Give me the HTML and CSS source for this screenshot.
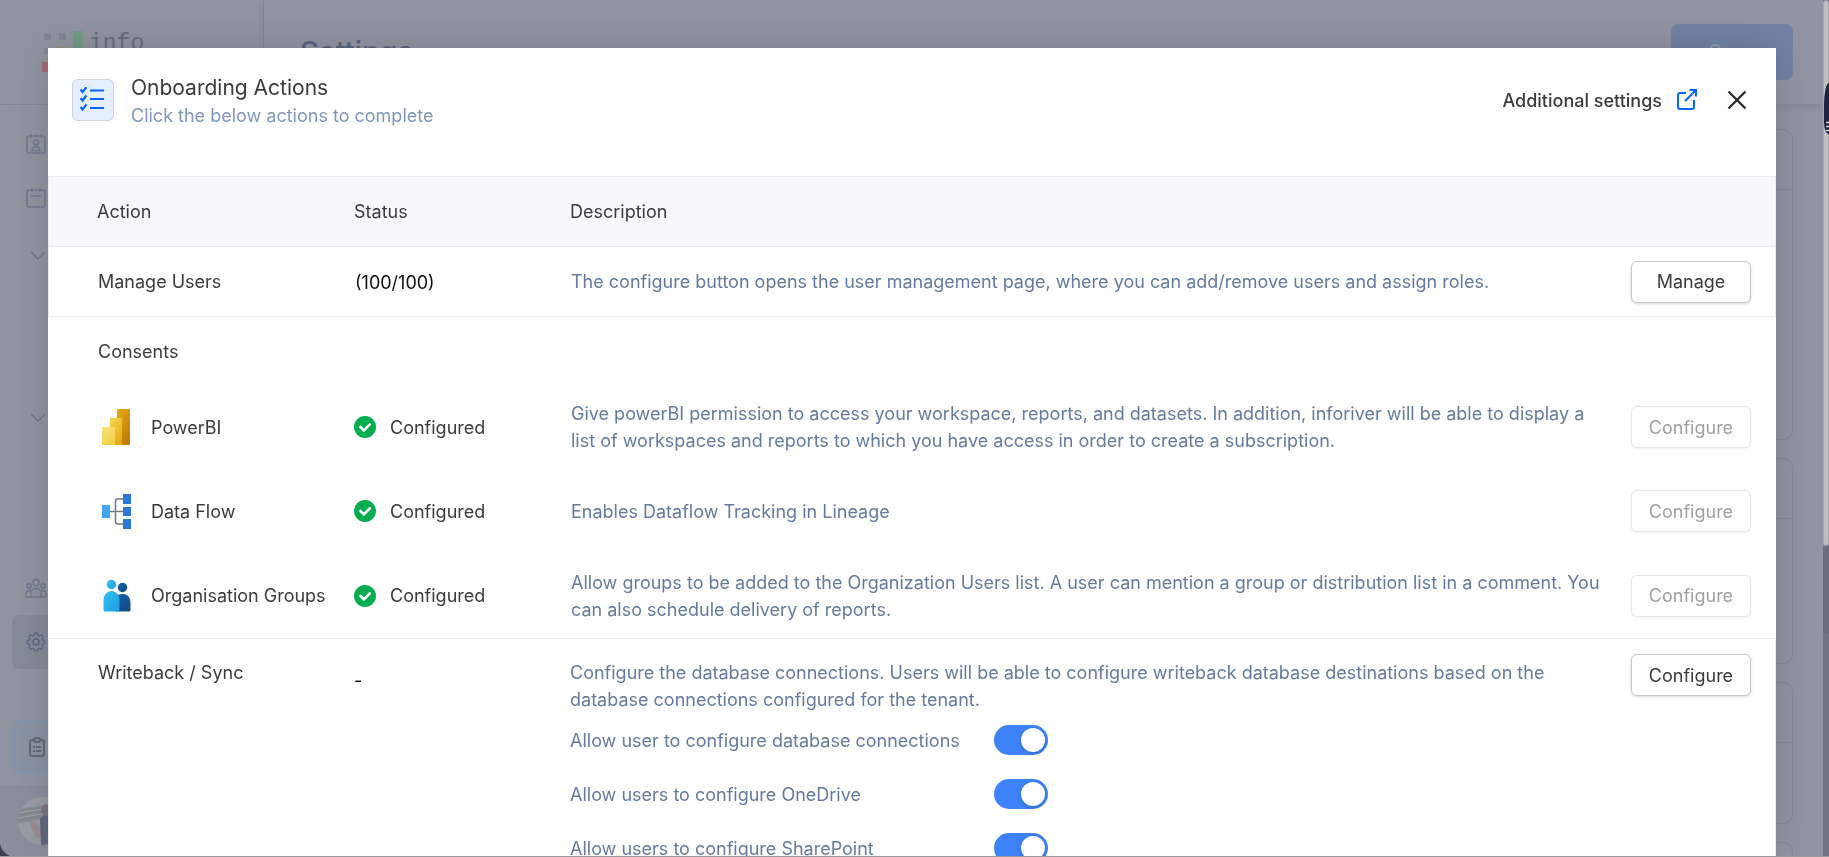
FILE: index.html
```html
<!DOCTYPE html>
<html lang="en">
<head>
<meta charset="utf-8">
<title>Settings</title>
<link rel="stylesheet" href="styles.css">
</head>
<body>
<div class="app">
  <aside class="sidebar">
    <div class="brand">
      <svg class="brand-mark" width="42" height="42" viewBox="0 0 42 42" aria-hidden="true">
        <path fill="#858891" d="M2 2h7v7H2zM17 2h7v7h-7zM2 17h7v7H2z"/>
        <path fill="#a58d66" d="M15 16h11v11H15z"/>
        <path fill="#6d9d80" d="M31 0h10v41H31z"/>
        <path fill="#aa6673" d="M0 31h10v10H0z"/>
      </svg>
      <span class="brand-name">info</span>
    </div>
    <nav class="nav" aria-label="Main">
      <a class="nav-item" href="#" aria-label="Contacts">
        <svg width="24" height="24" viewBox="0 0 24 24"><rect x="3" y="4" width="18" height="17" rx="2"/><path d="M7 2v4M12 2v2M17 2v4M8 18.500c0-5 8-5 8 0z"/><circle cx="12" cy="10.500" r="2.500"/></svg>
      </a>
      <a class="nav-item" href="#" aria-label="Calendar">
        <svg width="24" height="24" viewBox="0 0 24 24"><rect x="3" y="4" width="18" height="17" rx="2"/><path d="M8 2v4M16 2v4M7 10h10"/></svg>
      </a>
      <a class="nav-item nav-group" href="#" aria-label="Expand group">
        <svg width="24" height="24" viewBox="0 0 24 24"><path d="M7 9l7 7 7-7"/></svg>
      </a>
      <a class="nav-item nav-group-last" href="#" aria-label="Expand group">
        <svg width="24" height="24" viewBox="0 0 24 24"><path d="M7 9l7 7 7-7"/></svg>
      </a>
      <a class="nav-item nav-people" href="#" aria-label="People">
        <svg width="24" height="24" viewBox="0 0 24 24"><circle cx="12" cy="6.500" r="3"/><circle cx="5" cy="10" r="2.200"/><circle cx="19" cy="10" r="2.200"/><path d="M7 21v-4c0-6 10-6 10 0v4zM7 21H2v-3c0-3 2-4 5-3M17 21h5v-3c0-3-2-4-5-3"/></svg>
      </a>
      <a class="nav-item nav-current" href="#" aria-label="Settings">
        <svg width="24" height="24" viewBox="0 0 24 24"><circle cx="12" cy="12" r="3"/><path d="M10.300 4.300c.4-1.800 3-1.800 3.400 0a1.700 1.700 0 0 0 2.600 1.100c1.500-1 3.300.8 2.400 2.400a1.700 1.700 0 0 0 1 2.500c1.800.4 1.800 3 0 3.400a1.700 1.700 0 0 0-1 2.600c.9 1.500-.9 3.300-2.400 2.400a1.700 1.700 0 0 0-2.600 1c-.4 1.800-3 1.800-3.400 0a1.700 1.700 0 0 0-2.600-1c-1.500.9-3.300-.9-2.400-2.400a1.700 1.700 0 0 0-1-2.600c-1.800-.4-1.800-3 0-3.400a1.700 1.700 0 0 0 1-2.500c-.9-1.600.9-3.400 2.400-2.400a1.700 1.700 0 0 0 2.600-1.100z"/></svg>
      </a>
      <a class="nav-item nav-tasks" href="#" aria-label="Tasks">
        <svg width="24" height="24" viewBox="0 0 24 24"><path d="M9 5H7a2 2 0 0 0-2 2v12a2 2 0 0 0 2 2h10a2 2 0 0 0 2-2V7a2 2 0 0 0-2-2h-2"/><rect x="9" y="3" width="6" height="4" rx="2"/><path d="M8 12h2M11 12h5M8 16h2M11 16h5"/></svg>
      </a>
    </nav>
    <div class="account">
      <svg width="48" height="48" viewBox="0 0 48 48" aria-hidden="true">
        <clipPath id="avatar"><circle cx="24" cy="24" r="24"/></clipPath>
        <g clip-path="url(#avatar)">
          <path fill="#9a9ea5" d="M0 0h48v48H0z"/>
          <path fill="#838b90" d="M0 12l48-6v12L0 26z"/>
          <path stroke="#a3a8ad" stroke-width="1" fill="none" d="M0 16l30-5M0 21l30-5"/>
          <path fill="#9d8e93" d="M11 24l4-2 8 10v9h-5z"/>
          <path fill="#5d667f" d="M22 22l4-4h11v30H23z"/>
          <ellipse cx="28" cy="13" rx="5" ry="6" fill="#7b737d"/>
        </g>
      </svg>
    </div>
  </aside>
  <main class="page">
    <header class="page-header">
      <h1 class="page-title">Settings</h1>
      <button class="save" type="button">Save</button>
    </header>
    <div class="cards">
      <section class="card card-tall"><div class="card-head"></div></section>
      <section class="card card-medium"><div class="card-head"></div></section>
      <section class="card card-short"><div class="card-head"></div></section>
      <section class="card card-short"><div class="card-head"></div></section>
    </div>
  </main>
  <div class="scrollbar"><div class="scroll-thumb"></div><div class="scroll-inner"></div></div>
  <div class="side-tab"><svg width="3" height="12" viewBox="0 0 3 12" aria-hidden="true"><path d="M0 1.500h3M0 5.500h3M0 9.500h3" stroke="#d5d7e2" stroke-width="1.500"/></svg></div>
</div>

<div class="overlay">
  <section class="modal" role="dialog" aria-labelledby="dialog-title">
    <header class="modal-header">
      <span class="modal-icon">
        <svg width="26" height="26" viewBox="0 0 26 26" fill="none" stroke="#0766ff" stroke-width="2" aria-hidden="true"><path d="M10 3.500h14M10 12h14M10 21h14"/><path stroke-width="2.200" d="M.5 2.500l2 2.500 4-5M.5 11l2 2.500 4-5M.5 20l2 2.500 4-5"/></svg>
      </span>
      <div class="modal-heading">
        <h2 class="modal-title" id="dialog-title">Onboarding Actions</h2>
        <p class="modal-subtitle">Click the below actions to complete</p>
      </div>
      <a class="more" href="#">Additional settings
        <svg width="22" height="22" viewBox="0 0 22 22" fill="none" stroke="#0766ff" stroke-width="2" aria-hidden="true"><path d="M10 4H4a2 2 0 0 0-2 2v12a2 2 0 0 0 2 2h12a2 2 0 0 0 2-2v-7"/><path d="M13.500 1H20v6.500M20 1L9 12"/></svg>
      </a>
      <button class="close" type="button" aria-label="Close">
        <svg width="20" height="20" viewBox="0 0 20 20" fill="none" stroke="#2d2d30" stroke-width="2.400" aria-hidden="true"><path d="M1.500 1.500l17 17M18.500 1.500l-17 17"/></svg>
      </button>
    </header>

    <table class="actions">
      <colgroup><col class="col-action"><col class="col-status"><col><col class="col-button"></colgroup>
      <thead>
        <tr><th>Action</th><th>Status</th><th>Description</th><td></td></tr>
      </thead>
      <tbody class="group">
        <tr class="row-short">
          <td>Manage Users</td>
          <td class="count">(100/100)</td>
          <td class="desc">The configure button opens the user management page, where you can add/remove users and assign roles.</td>
          <td><button class="btn" type="button">Manage</button></td>
        </tr>
      </tbody>
      <tbody class="group group-plain">
        <tr class="row-short"><td colspan="4">Consents</td></tr>
        <tr class="row-tall">
          <td><span class="service">
            <svg width="36" height="36" viewBox="0 0 36 36" aria-hidden="true">
              <defs>
                <linearGradient id="pb1" x2=".5" y2="1"><stop stop-color="#e3ab10"/><stop offset="1" stop-color="#c27d0d"/></linearGradient>
                <linearGradient id="pb2" x2=".5" y2="1"><stop stop-color="#f4d350"/><stop offset="1" stop-color="#e6ae15"/></linearGradient>
                <linearGradient id="pb3" x2=".5" y2="1"><stop stop-color="#f9e384"/><stop offset="1" stop-color="#f4d045"/></linearGradient>
              </defs>
              <rect x="19" y="0" width="13" height="36" rx="1" fill="url(#pb1)"/>
              <path fill="url(#pb2)" d="M12 9h11a1 1 0 0 1 1 1v26H12z"/>
              <path fill="url(#pb3)" d="M4 18h12a1 1 0 0 1 1 1v17H4z"/>
            </svg>PowerBI</span></td>
          <td><span class="status"><svg width="22" height="22" viewBox="0 0 22 22" aria-hidden="true"><circle cx="11" cy="11" r="11" fill="#05ac50"/><path d="M6.500 11l3.300 3.300 6-6" fill="none" stroke="#fff" stroke-width="2.600" stroke-linecap="round"/></svg>Configured</span></td>
          <td class="desc">Give powerBI permission to access your workspace, reports, and datasets. In addition, inforiver will be able to display a list of workspaces and reports to which you have access in order to create a subscription.</td>
          <td><button class="btn" type="button" disabled>Configure</button></td>
        </tr>
        <tr class="row-tall">
          <td><span class="service">
            <svg width="36" height="36" viewBox="0 0 36 36" aria-hidden="true">
              <path d="M12 18.500h14M26 6h-6q-2.500 0-2.500 2.500v20q0 2.500 2.500 2.500h6" fill="none" stroke="#707a86" stroke-width="1.500"/>
              <path fill="#45a4f0" d="M4 12h8v13H4z"/>
              <path fill="#2b7ad8" d="M25 1h8v10h-8zM25 14h8v9h-8zM25 26h8v10h-8z"/>
            </svg>Data Flow</span></td>
          <td><span class="status"><svg width="22" height="22" viewBox="0 0 22 22" aria-hidden="true"><circle cx="11" cy="11" r="11" fill="#05ac50"/><path d="M6.500 11l3.300 3.300 6-6" fill="none" stroke="#fff" stroke-width="2.600" stroke-linecap="round"/></svg>Configured</span></td>
          <td class="desc">Enables Dataflow Tracking in Lineage</td>
          <td><button class="btn" type="button" disabled>Configure</button></td>
        </tr>
        <tr class="row-tall">
          <td><span class="service">
            <svg width="36" height="36" viewBox="0 0 36 36" aria-hidden="true">
              <defs>
                <linearGradient id="og1" x2="1" y2="1"><stop stop-color="#35c2f0"/><stop offset="1" stop-color="#1d9ce3"/></linearGradient>
                <linearGradient id="og2" x2=".6" y2="1"><stop stop-color="#0f63ac"/><stop offset="1" stop-color="#174a86"/></linearGradient>
              </defs>
              <circle cx="24.500" cy="9.500" r="4.700" fill="url(#og2)"/>
              <path fill="url(#og2)" d="M18 19c2-3 5-3 7-3 5 0 7.500 4 7.500 9v7q0 1.500-1.500 1.500H18z"/>
              <circle cx="13.500" cy="6.500" r="4.700" fill="url(#og1)"/>
              <path fill="url(#og1)" d="M5.500 22c0-5 3.500-9 8-9s8 4 8 9v9.500q0 2-2 2H7q-1.500 0-1.500-1.500z"/>
            </svg>Organisation Groups</span></td>
          <td><span class="status"><svg width="22" height="22" viewBox="0 0 22 22" aria-hidden="true"><circle cx="11" cy="11" r="11" fill="#05ac50"/><path d="M6.500 11l3.300 3.300 6-6" fill="none" stroke="#fff" stroke-width="2.600" stroke-linecap="round"/></svg>Configured</span></td>
          <td class="desc">Allow groups to be added to the Organization Users list. A user can mention a group or distribution list in a comment. You can also schedule delivery of reports.</td>
          <td><button class="btn" type="button" disabled>Configure</button></td>
        </tr>
      </tbody>
      <tbody class="group">
        <tr class="row-open">
          <td>Writeback / Sync</td>
          <td class="empty">-</td>
          <td class="desc">
            <p class="desc-text">Configure the database connections. Users will be able to configure writeback database destinations based on the database connections configured for the tenant.</p>
            <div class="option"><label for="opt-db">Allow user to configure database connections</label><input class="toggle" id="opt-db" type="checkbox" role="switch" checked></div>
            <div class="option"><label for="opt-od">Allow users to configure OneDrive</label><input class="toggle" id="opt-od" type="checkbox" role="switch" checked></div>
            <div class="option"><label for="opt-sp">Allow users to configure SharePoint</label><input class="toggle" id="opt-sp" type="checkbox" role="switch" checked></div>
          </td>
          <td class="cell-button"><button class="btn" type="button">Configure</button></td>
        </tr>
      </tbody>
    </table>
  </section>
</div>
</body>
</html>
```
FILE: styles.css
```css
* { box-sizing: border-box; }

body {
  margin: 0;
  height: 100vh;
  overflow: hidden;
  background: #3a4150;
  color: #3b3b3d;
  font: 18px/27px Inter, "Liberation Sans", sans-serif;
}

button { font: inherit; cursor: pointer; }
h1, h2, p { margin: 0; }

/* Dimmed page behind the dialog */
.app {
  position: relative;
  display: flex;
  height: 100%;
  overflow: hidden;
  background: #9195a0;
  border-bottom-left-radius: 16px;
}

.sidebar {
  display: flex;
  flex-direction: column;
  width: 264px;
  border-right: 1px solid #838894;
}

.brand {
  display: flex;
  gap: 5px;
  height: 105px;
  padding: 31px 0 0 42px;
  border-bottom: 1px solid #838894;
}

.brand-name {
  color: #666a75;
  font: 23px/27px "Liberation Mono", monospace;
}

.nav { flex: 1; padding: 12px 12px 0; }

.nav-item {
  display: flex;
  align-items: center;
  height: 54px;
  padding-left: 12px;
  border-radius: 8px;
}

.nav-item svg {
  fill: none;
  stroke: #6f788d;
  stroke-width: 1.5;
}

.nav-group { margin-top: 3px; }
.nav-group-last { margin-top: 108px; }
.nav-people { margin-top: 117px; }
.nav-current { background: #868b98; }
.nav-current svg { stroke: #5d6984; }

.nav-tasks {
  margin-top: 51px;
  background: #8b94a3;
  border: 1px solid #8097b1;
}

.nav-tasks svg { stroke: #61656f; stroke-width: 2; }

.account {
  height: 72px;
  padding: 12px 18px;
  background: #8b8f9b;
}

.page { flex: 1; display: flex; flex-direction: column; }

.page-header {
  display: flex;
  flex: none;
  align-items: center;
  justify-content: space-between;
  height: 105px;
  padding: 0 30px 0 36px;
  border-bottom: 1px solid #868b96;
  box-shadow: 0 2px 6px rgba(70, 76, 92, 0.16);
}

.page-title {
  color: #566079;
  font-size: 29px;
  line-height: 36px;
  font-weight: 500;
}

.save {
  width: 122px;
  height: 56px;
  background: #7082a3;
  border: 0;
  border-radius: 8px;
  color: #929aae;
  font-size: 20px;
  font-weight: 500;
}

.cards {
  display: flex;
  flex-direction: column;
  gap: 18px;
  padding: 24px 30px 0 36px;
}

.card {
  flex: none;
  border: 1px solid #838894;
  border-radius: 10px;
}

.card-head { height: 60px; border-bottom: 1px solid #838894; }
.card-tall { height: 311px; }
.card-medium { height: 206px; }
.card-short { height: 142px; }

.scrollbar {
  display: flex;
  flex-direction: column;
  width: 6px;
  background: #717580;
}

.scroll-thumb {
  height: 546px;
  background: #bfbfc0;
  border: 1px solid #a4a6aa;
  border-radius: 3px;
}

.scroll-inner { height: 88px; background: #696e79; border-radius: 0 0 3px 3px; }

.side-tab {
  position: absolute;
  top: 83px;
  right: 0;
  width: 5px;
  height: 51px;
  padding: 38px 0 0 2px;
  background: #1d2142;
  border-radius: 5px 0 0 5px / 22px 0 0 12px;
  line-height: 0;
}

/* Dialog */
.overlay {
  position: fixed;
  inset: 0;
  display: flex;
  padding: 48px 53px 0 48px;
  border-bottom: 1px solid #999a9e;
  overflow: hidden;
}

.modal {
  flex: 1;
  min-width: 0;
  background: #fff;
  box-shadow: 0 0 36px rgba(70, 76, 92, 0.3);
}

.modal-header {
  display: flex;
  align-items: flex-start;
  height: 128px;
  padding: 25px 29px 0 24px;
}

.modal-icon {
  display: flex;
  align-items: center;
  justify-content: center;
  width: 42px;
  height: 42px;
  margin: 6px 17px 0 0;
  background: #e6efff;
  border: 1px solid #ccd3df;
  border-radius: 6px;
}

.modal-heading { flex: 1; }

.modal-title {
  font-size: 21px;
  line-height: 29px;
  font-weight: 400;
}

.modal-subtitle { color: #8297b8; }

.more {
  display: flex;
  align-items: center;
  gap: 14px;
  height: 54px;
  color: #3b3b3d;
  font-weight: 500;
  text-decoration: none;
}

.close {
  display: flex;
  align-items: center;
  height: 54px;
  padding: 0;
  margin-left: 29px;
  background: none;
  border: 0;
}

.actions {
  width: 100%;
  table-layout: fixed;
  border-collapse: separate;
  border-spacing: 0;
}

.col-action { width: 306px; }
.col-status { width: 216px; }
.col-button { width: 162px; }

.actions th {
  background: #f5f8ff;
  font-weight: 400;
  text-align: left;
}

.actions thead td { background: #f5f8ff; }

.actions th,
.actions thead td {
  height: 71px;
  padding: 0;
  border-top: 1px solid #ebebed;
  border-bottom: 1px solid #ebebed;
}

.actions th:first-child { padding-left: 48px; }
.actions tbody td { padding: 0; }
.actions tbody td:first-child { padding-left: 49px; }
.actions tr > :first-child { border-left: 1px solid #ebebed; }
.actions tr > :last-child { border-right: 1px solid #ebebed; }
.actions .group-plain td:first-child { border-left-color: transparent; }
.actions .group-plain td:last-child { border-right-color: transparent; }
.actions .group tr:last-child td { border-bottom: 1px solid #ebebed; }

.row-short { height: 70px; }
.group-plain .row-short { height: 68px; }
.row-tall { height: 84px; }
.group-plain .row-tall:last-child { height: 86px; }
.row-open { vertical-align: top; }
.actions .row-open td { padding-top: 20px; }
.actions .row-open .empty { padding-top: 28px; color: #111; }
.actions .row-open .cell-button { padding-top: 15px; }

.actions .count { padding: 2px 0 0 1px; color: #111; }
.actions .desc { padding-right: 3px; color: #667a9d; }
.actions .group:not(:last-child) .desc { padding-left: 1px; }

.service { display: flex; align-items: center; gap: 17px; white-space: nowrap; }
.status { display: flex; align-items: center; gap: 14px; }

.btn {
  display: block;
  width: 120px;
  height: 42px;
  margin-left: 17px;
  padding: 0;
  background: #fff;
  border: 1px solid #c9c9cc;
  border-radius: 6px;
  box-shadow: 0 1px 3px rgba(0, 0, 0, 0.16);
  color: #3b3b3d;
}

.btn:disabled {
  border-color: #e6e6e8;
  box-shadow: 0 1px 3px rgba(0, 0, 0, 0.06);
  color: #a0a0a0;
}

.option {
  display: grid;
  grid-template-columns: 424px auto;
  align-items: center;
  justify-content: start;
  height: 54px;
}

.toggle {
  appearance: none;
  display: flex;
  align-items: center;
  width: 54px;
  height: 30px;
  margin: 0;
  padding: 3px;
  background: #b8c2d3;
  border-radius: 15px;
}

.toggle::before {
  content: "";
  width: 24px;
  height: 24px;
  background: #fff;
  border-radius: 50%;
  box-shadow: 0 2px 4px rgba(0, 35, 11, 0.2);
}

.toggle:checked { justify-content: flex-end; background: #3d82f8; }
```
